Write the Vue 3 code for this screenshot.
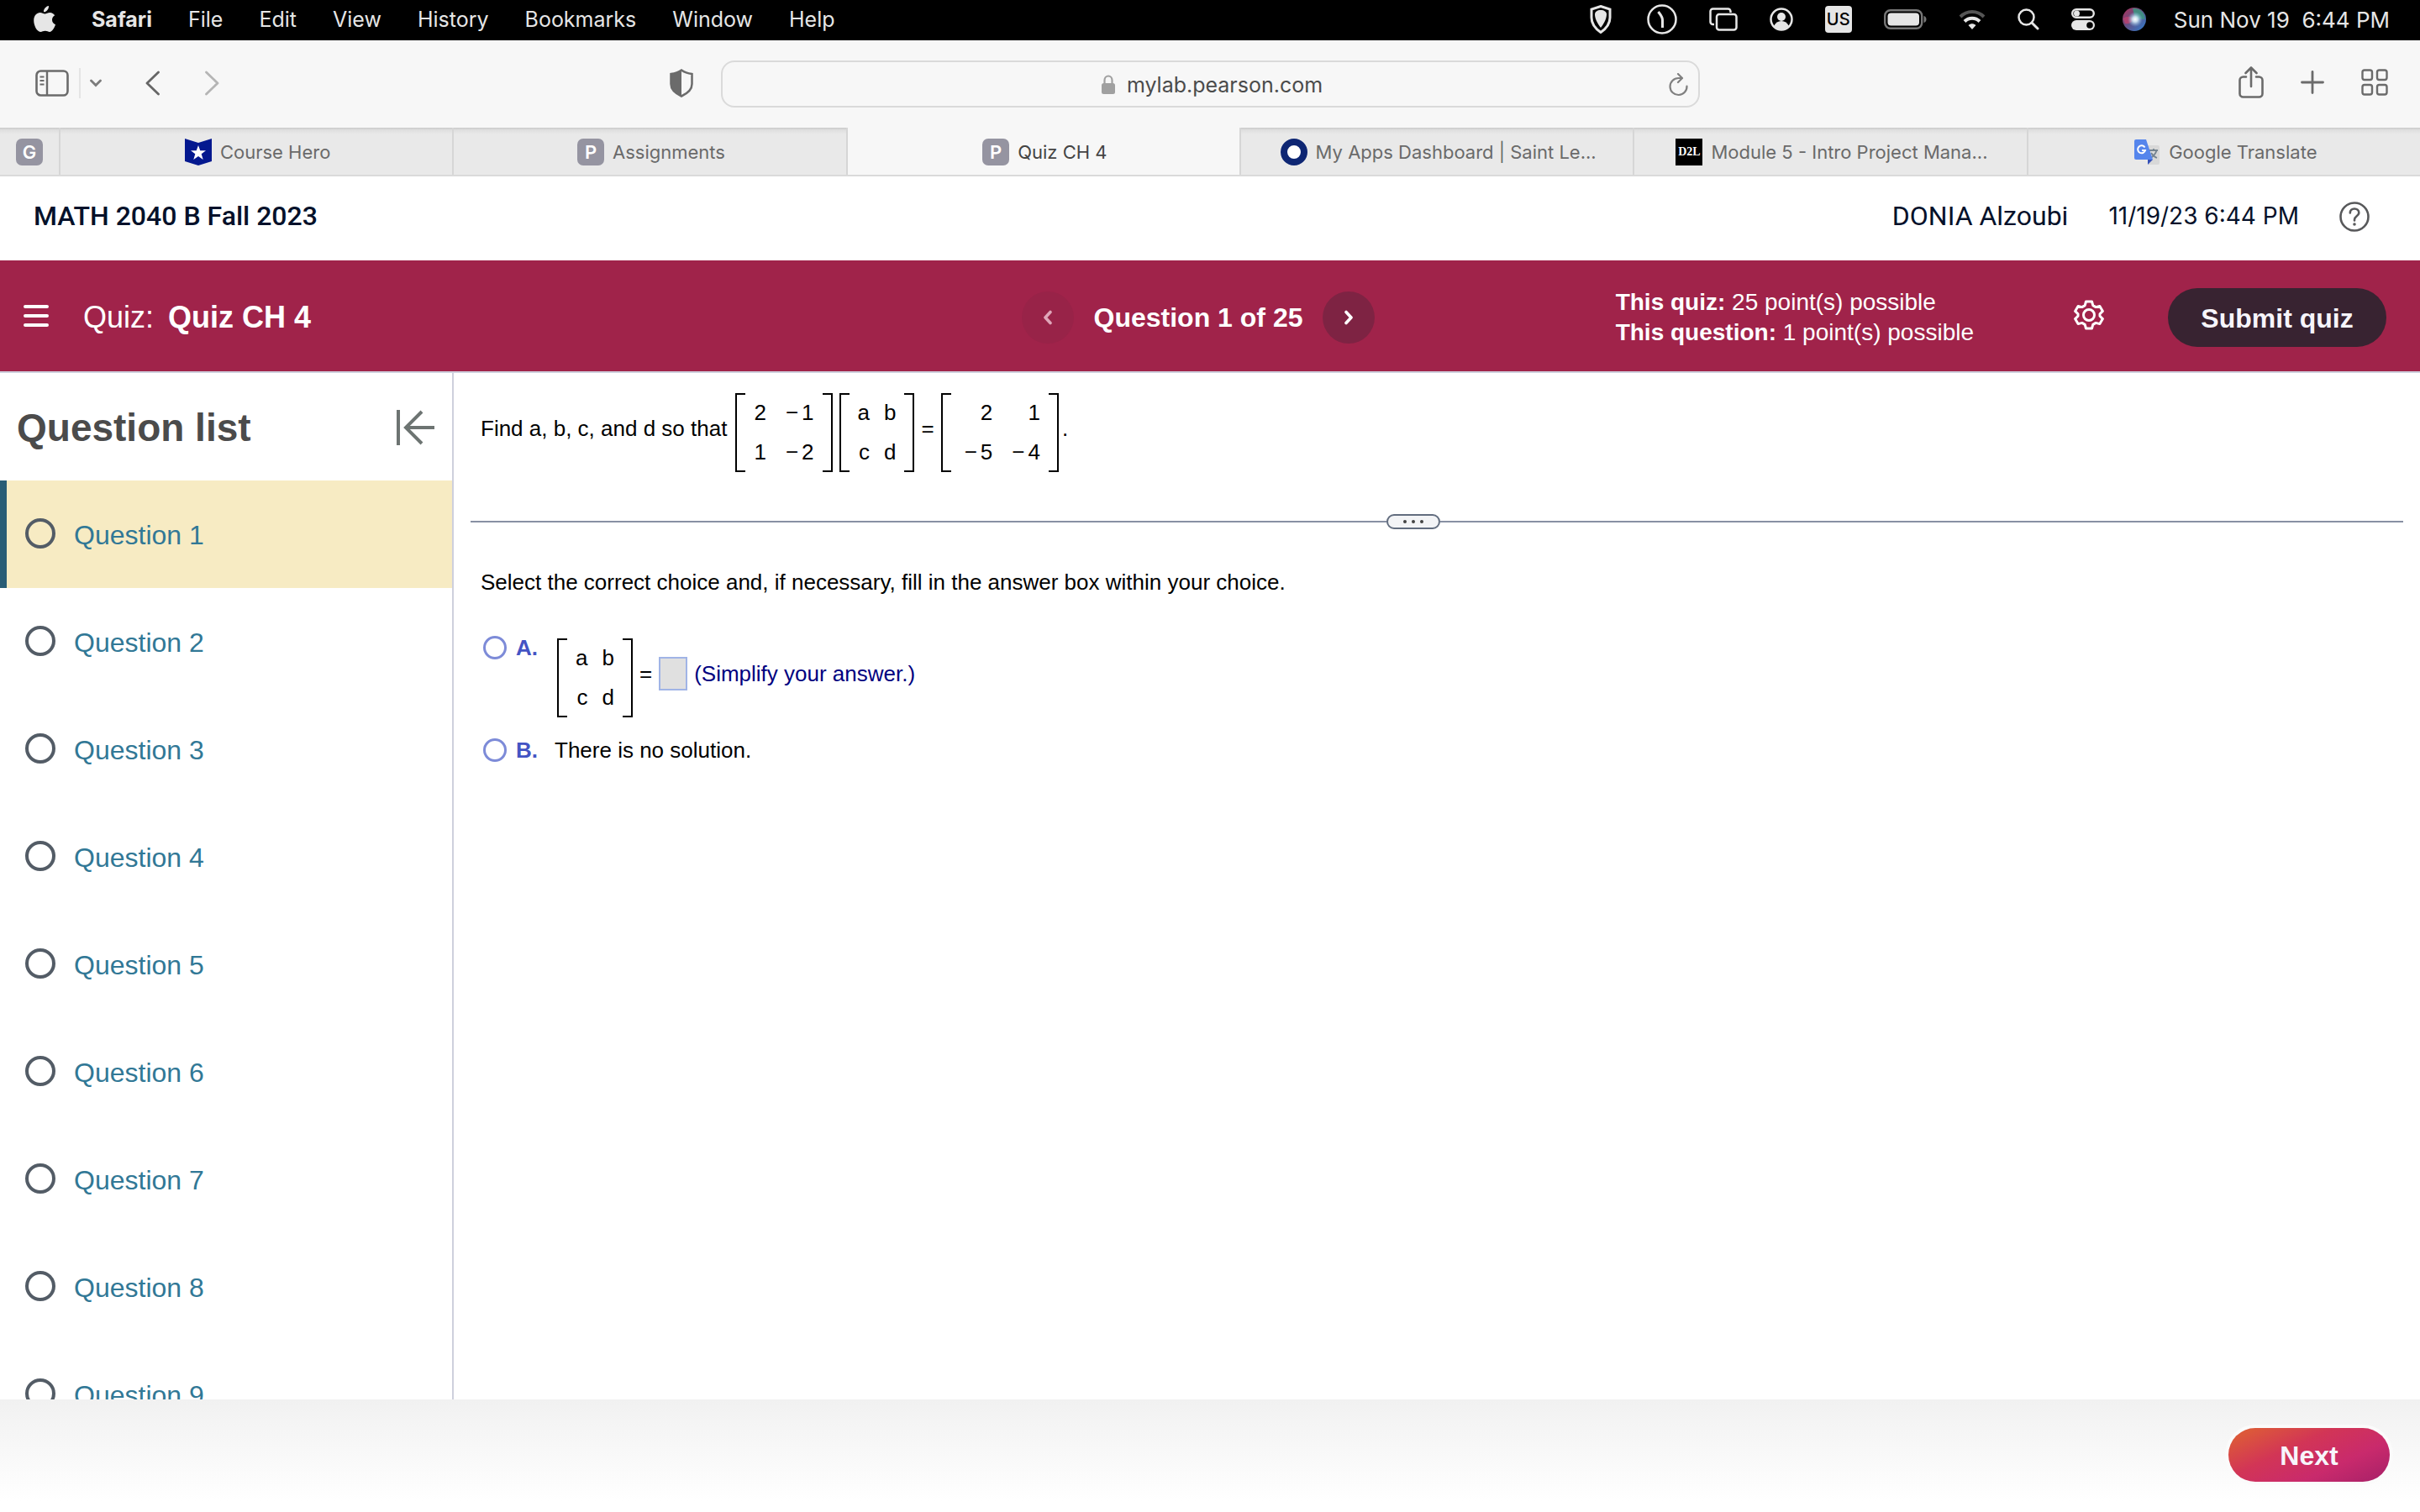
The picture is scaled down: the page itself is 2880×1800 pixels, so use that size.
<script setup>
import { ref } from 'vue'

const menus = ['File', 'Edit', 'View', 'History', 'Bookmarks', 'Window', 'Help']

const tabs = [
  { icon: 'hero', title: 'Course Hero' },
  { icon: 'letter', title: 'Assignments' },
  { icon: 'letter', title: 'Quiz CH 4', active: true },
  { icon: 'ring', title: 'My Apps Dashboard | Saint Le...' },
  { icon: 'd2l', title: 'Module 5 - Intro Project Mana...' },
  { icon: 'translate', title: 'Google Translate' },
]

const questions = [1, 2, 3, 4, 5, 6, 7, 8, 9]
const current = ref(1)
const choice = ref('')
const answer = ref('')
const address = ref('mylab.pearson.com')

const coefficients = [['2', '−1'], ['1', '−2']]
const unknowns = [['a', 'b'], ['c', 'd']]
const product = [['2', '1'], ['−5', '−4']]
</script>

<template>
  <div class="screen">
    <header class="menubar">
      <nav class="menus">
        <svg class="apple" width="26" height="32" viewBox="0 0 26 32" fill="#e6e6e6">
          <path d="M18 0c.3 3.600-2.700 7.300-6 7.300C11.500 3.900 14.700.5 18 0z" />
          <path d="M25.200 11.200c-2 1.200-3.200 3-3.200 5.300 0 2.700 1.500 4.800 4 5.800-.9 3-3.500 8.200-6.500 8.700-2 .2-3.300-1.200-5.700-1.200-2.500 0-3.800 1.300-5.700 1.200C4 30.700.2 23.500.2 17.500c0-6 3.700-9.500 7.500-9.500 2.200 0 4 1.400 5.700 1.400 1.500 0 3.500-1.500 6.100-1.500 2.300 0 4.400 1.300 5.700 3.300z" />
        </svg>
        <strong>Safari</strong>
        <span v-for="m in menus" :key="m">{{ m }}</span>
      </nav>
      <div class="status">
        <div class="status-icons">
          <svg width="30" height="34" viewBox="0 0 30 34" fill="none">
            <path d="M13 1.500 24 5v10c0 8-6 14-11 17.500C8 29 2 23 2 15V5z" stroke="#e6e6e6" stroke-width="3" />
            <path d="M13 6c4 0 7 2 7 5 0 6-4 12-7 16-3-4-7-10-7-16 0-3 3-5 7-5z" fill="#e6e6e6" />
          </svg>
          <svg width="36" height="36" viewBox="0 0 36 36" fill="none" stroke="#e6e6e6">
            <circle cx="18" cy="18" r="16.500" stroke-width="2.500" />
            <path d="M13.500 9c3 4 5 6 5 10v9" stroke-width="3" />
          </svg>
          <svg width="34" height="28" viewBox="0 0 34 28" fill="none" stroke="#e6e6e6" stroke-width="2.500">
            <path d="M6 20H4.500a3 3 0 0 1-3-3V4.500a3 3 0 0 1 3-3h18a3 3 0 0 1 3 3V6" />
            <rect x="9" y="8" width="23.500" height="18.500" rx="3" />
          </svg>
          <svg width="28" height="28" viewBox="0 0 28 28">
            <circle cx="14" cy="14" r="12.500" fill="none" stroke="#e6e6e6" stroke-width="2.500" />
            <circle cx="14" cy="11" r="5" fill="#e6e6e6" />
            <path d="M5 22c2-4 5-6 9-6s7 2 9 6c-5 5.500-13 5.500-18 0z" fill="#e6e6e6" />
          </svg>
          <span class="keyboard">US</span>
          <svg width="51" height="24" viewBox="0 0 51 24">
            <rect x="1.200" y="1.200" width="44" height="21.600" rx="6.500" fill="none" stroke="#777" stroke-width="2.400" />
            <rect x="4.500" y="4.500" width="37.500" height="15" rx="4" fill="#e6e6e6" />
            <path d="M47.500 8c4 1 4 7 0 8z" fill="#777" />
          </svg>
          <svg width="32" height="24" viewBox="0 0 32 24" fill="none" stroke-width="4">
            <path d="M2 9c8-8 20-8 28 0" stroke="#555" />
            <path d="M7 14.500c5-5 13-5 18 0" stroke="#e6e6e6" />
            <path d="M11.500 19c3-2.500 6-2.500 9 0L16 24z" fill="#e6e6e6" />
          </svg>
          <svg width="26" height="26" viewBox="0 0 26 26" fill="none" stroke="#e6e6e6">
            <circle cx="10.500" cy="10.500" r="9" stroke-width="2.500" />
            <path d="m17 17 7 7" stroke-width="3" stroke-linecap="round" />
          </svg>
          <svg width="28" height="26" viewBox="0 0 28 26">
            <rect x="1.200" y="1.200" width="25.600" height="9.600" rx="4.800" fill="none" stroke="#e6e6e6" stroke-width="2.400" />
            <circle cx="6.500" cy="6" r="3.500" fill="#e6e6e6" />
            <rect y="14" width="28" height="12" rx="6" fill="#e6e6e6" />
            <circle cx="22" cy="20" r="3.800" fill="#000" />
          </svg>
        </div>
        <svg width="28" height="28" viewBox="0 0 28 28">
          <defs>
            <linearGradient id="orb" x1="0" y1="0" x2="1" y2="1">
              <stop offset="0" stop-color="#b5325c" /><stop offset=".4" stop-color="#6a4a7c" />
              <stop offset="1" stop-color="#2b7fd0" />
            </linearGradient>
            <radialGradient id="glow">
              <stop offset="0" stop-color="#fff" /><stop offset=".35" stop-color="#d5ecf7" stop-opacity=".9" />
              <stop offset="1" stop-color="#7fb9e0" stop-opacity="0" />
            </radialGradient>
          </defs>
          <circle cx="14" cy="14" r="14" fill="url(#orb)" />
          <path d="M12 1c9-1 15 6 14.500 13L15 13z" fill="#3a9a80" opacity=".8" />
          <path d="M1 13c4-3 9-3 12 1-2 4-6 6-10 5z" fill="#c8406e" opacity=".7" />
          <circle cx="15" cy="14" r="9" fill="url(#glow)" />
        </svg>
        <time class="clock">Sun Nov 19&nbsp; 6:44 PM</time>
      </div>
    </header>

    <div class="toolbar">
      <div class="tools-left">
        <button class="tool" aria-label="Sidebar">
          <svg width="40" height="32" viewBox="0 0 40 32" fill="none" stroke="#6b6b6b">
            <rect x="1.500" y="1.500" width="37" height="29" rx="5" stroke-width="2.600" />
            <path d="M14 2v28" stroke-width="2.400" /><path d="M5.500 8.500h5M5.500 13h5M5.500 17.500h5" stroke-width="2" />
          </svg>
        </button>
        <i class="rule"></i>
        <button class="tool menu-caret" aria-label="Tab groups">
          <svg width="14" height="10" viewBox="0 0 14 10" fill="none" stroke="#7c7c7c" stroke-width="2.800" stroke-linecap="round"><path d="m1.500 2 5.500 5.500L12.500 2" /></svg>
        </button>
        <button class="tool back" aria-label="Back">
          <svg width="17" height="30" viewBox="0 0 17 30" fill="none" stroke="#666" stroke-width="2.800" stroke-linecap="round" stroke-linejoin="round"><path d="M15.500 2 2 15l13.500 13" /></svg>
        </button>
        <button class="tool forward" aria-label="Forward">
          <svg width="17" height="30" viewBox="0 0 17 30" fill="none" stroke="#b5b5b5" stroke-width="2.800" stroke-linecap="round" stroke-linejoin="round"><path d="M1.500 2 15 15 1.500 28" /></svg>
        </button>
        <button class="tool privacy" aria-label="Privacy report">
          <svg width="28" height="34" viewBox="0 0 28 34">
            <path d="M14 1.500c4 3 8 4 12.500 4.500v12c0 7-6 11.500-12.500 14.500C7.500 29.500 1.500 25 1.500 18V6C6 5.500 10 4.500 14 1.500z" fill="none" stroke="#6b6b6b" stroke-width="2.500" />
            <path d="M14 1.500v31C7.500 29.500 1.500 25 1.500 18V6C6 5.500 10 4.500 14 1.500z" fill="#6b6b6b" />
          </svg>
        </button>
      </div>
      <div class="address">
        <svg width="16" height="24" viewBox="0 0 16 24">
          <path d="M3.500 11V6.500a4.500 5 0 0 1 9 0V11" fill="none" stroke="#a0a0a0" stroke-width="2.200" />
          <rect y="10" width="16" height="13" rx="2.500" fill="#a0a0a0" />
        </svg>
        <input v-model="address" aria-label="Address" />
        <button class="tool reload" aria-label="Reload">
          <svg width="24" height="28" viewBox="0 0 24 28" fill="none" stroke="#808080" stroke-width="2.200" stroke-linecap="round" stroke-linejoin="round">
            <path d="M21.500 15.500A10 10 0 1 1 11.500 6h4" /><path d="m11 1 5 5-5 5" />
          </svg>
        </button>
      </div>
      <div class="tools-right">
        <button class="tool" aria-label="Share">
          <svg width="30" height="38" viewBox="0 0 30 38" fill="none" stroke="#6b6b6b" stroke-width="2.600" stroke-linecap="round" stroke-linejoin="round">
            <path d="M9 12.500H5.500a4 4 0 0 0-4 4v16a4 4 0 0 0 4 4h19a4 4 0 0 0 4-4v-16a4 4 0 0 0-4-4H21" />
            <path d="M15 24V2M8.500 8 15 1.500 21.500 8" />
          </svg>
        </button>
        <button class="tool" aria-label="New tab">
          <svg width="28" height="28" viewBox="0 0 28 28" stroke="#6b6b6b" stroke-width="2.800" stroke-linecap="round"><path d="M14 1.500v25M1.500 14h25" /></svg>
        </button>
        <button class="tool" aria-label="Tab overview">
          <svg width="32" height="32" viewBox="0 0 32 32" fill="none" stroke="#6b6b6b" stroke-width="2.400">
            <rect x="1.500" y="1.500" width="11.500" height="11.500" rx="2.500" /><rect x="19" y="1.500" width="11.500" height="11.500" rx="2.500" />
            <rect x="1.500" y="19" width="11.500" height="11.500" rx="2.500" /><rect x="19" y="19" width="11.500" height="11.500" rx="2.500" />
          </svg>
        </button>
      </div>
    </div>

    <nav class="tabs">
      <button class="tab pinned" aria-label="Pinned tab"><span class="letter">G</span></button>
      <button v-for="t in tabs" :key="t.title" class="tab" :class="{ active: t.active }">
        <span v-if="t.icon === 'letter'" class="letter">P</span>
        <span v-else-if="t.icon === 'd2l'" class="d2l">D2L</span>
        <span v-else-if="t.icon === 'ring'" class="ring"></span>
        <svg v-else-if="t.icon === 'hero'" width="32" height="32" viewBox="0 0 32 32">
          <path d="M0 0l16 5L32 0v27l-16 5-16-5z" fill="#04188f" />
          <path d="m16 8 2.300 6.200H25l-5.300 4 2 6.800-5.700-4-5.700 4 2-6.800-5.300-4h6.700z" fill="#fff" />
        </svg>
        <svg v-else width="32" height="32" viewBox="0 0 32 32">
          <path d="M14 8h15a2 2 0 0 1 2 2v19a2 2 0 0 1-2 2H18z" fill="#d8d8d8" />
          <path d="M19 14h10M24 12v2M27.500 14c-1 4-4 7-7 9M21 17c2 3 4 5 7 6" fill="none" stroke="#74838f" stroke-width="1.800" />
          <path d="M17 25h6l-6 6z" fill="#3450b8" />
          <path d="M3 1h12l8 24H3a2 2 0 0 1-2-2V3a2 2 0 0 1 2-2z" fill="#5585ec" />
          <path d="M13.500 10.500A4.500 4.500 0 1 0 14 14h-4" fill="none" stroke="#fff" stroke-width="2" />
        </svg>
        <span>{{ t.title }}</span>
      </button>
    </nav>

    <header class="course">
      <h1>MATH 2040 B Fall 2023</h1>
      <div class="user">
        <span>DONIA Alzoubi</span>
        <time class="stamp">11/19/23 6:44 PM</time>
        <button class="tool help" aria-label="Help">
          <svg width="36" height="36" viewBox="0 0 36 36" fill="none" stroke="#58595b" stroke-width="2.600">
            <circle cx="18" cy="18" r="16.500" />
            <path d="M12.800 13.500c0-3.200 2.300-5 5.200-5s5.300 1.800 5.300 4.800c0 4-5.300 4-5.300 8.200v1" stroke-linecap="round" />
            <circle cx="18" cy="27" r="1" fill="#58595b" stroke-width="1.600" />
          </svg>
        </button>
      </div>
    </header>

    <div class="quizbar">
      <div class="quiz-name">
        <button class="tool hamburger" aria-label="Menu">
          <svg width="30" height="28" viewBox="0 0 30 28" stroke="#fff" stroke-width="4" stroke-linecap="round"><path d="M2 3h26M2 14h26M2 25h26" /></svg>
        </button>
        <span>Quiz:</span><strong>Quiz CH 4</strong>
      </div>
      <div class="pager">
        <button class="round" disabled aria-label="Previous question">
          <svg width="12" height="18" viewBox="0 0 12 18" fill="none" stroke="#dfa6b9" stroke-width="3.600" stroke-linecap="round" stroke-linejoin="round"><path d="M9 2.500 3 9l6 6.500" /></svg>
        </button>
        <strong>Question 1 of 25</strong>
        <button class="round next-round" aria-label="Next question">
          <svg width="12" height="18" viewBox="0 0 12 18" fill="none" stroke="#fff" stroke-width="3.600" stroke-linecap="round" stroke-linejoin="round"><path d="M3 2.500 9 9l-6 6.500" /></svg>
        </button>
      </div>
      <div class="quiz-side">
        <div class="points">
          <div><strong>This quiz:</strong> 25 point(s) possible</div>
          <div><strong>This question:</strong> 1 point(s) possible</div>
        </div>
        <button class="tool settings" aria-label="Settings">
          <svg width="36" height="36" viewBox="0 0 36 36" fill="none" stroke="#fff" stroke-width="3" stroke-linejoin="round">
            <path d="M14.500 2h7l1.300 4.600 3.400 2 4.700-1.200 3.500 6L31 16.800v2.400l3.400 3.400-3.500 6-4.700-1.200-3.400 2L21.500 34h-7l-1.300-4.600-3.400-2-4.700 1.200-3.500-6L5 19.200v-2.400l-3.400-3.400 3.500-6 4.700 1.200 3.400-2z" />
            <circle cx="18" cy="18" r="6.500" />
          </svg>
        </button>
        <button class="submit">Submit quiz</button>
      </div>
    </div>

    <div class="body">
      <aside class="sidebar">
        <div class="list-head">
          <h2>Question list</h2>
          <button class="tool" aria-label="Collapse list">
            <svg width="46" height="42" viewBox="0 0 46 42" fill="none" stroke="#6d7472" stroke-width="4"><path d="M2 0v42M45 21H11M30 2 11 21l19 19" /></svg>
          </button>
        </div>
        <ul>
          <li v-for="n in questions" :key="n">
            <a href="#" :class="{ current: n === current }" @click.prevent="current = n"><i class="dot"></i>Question {{ n }}</a>
          </li>
        </ul>
      </aside>

      <main class="work">
        <div class="math prompt">
          <span class="lead">Find a, b, c, and d so that</span>
          <table class="matrix"><tbody>
            <tr v-for="(row, r) in coefficients" :key="r">
              <td v-for="(v, c) in row" :key="c"><span v-if="v.length > 1" class="minus">−</span>{{ v.slice(-1) }}</td>
            </tr>
          </tbody></table>
          <table class="matrix"><tbody>
            <tr v-for="(row, r) in unknowns" :key="r"><td v-for="v in row" :key="v">{{ v }}</td></tr>
          </tbody></table>
          <span>=</span>
          <table class="matrix"><tbody>
            <tr v-for="(row, r) in product" :key="r">
              <td v-for="(v, c) in row" :key="c"><span v-if="v.length > 1" class="minus">−</span>{{ v.slice(-1) }}</td>
            </tr>
          </tbody></table>
          <span class="stop">.</span>
        </div>

        <div class="splitter">
          <button aria-label="Resize panes"><i></i><i></i><i></i></button>
        </div>

        <p class="instruction">Select the correct choice and, if necessary, fill in the answer box within your choice.</p>

        <div class="choice choice-a">
          <input id="choice-a" v-model="choice" type="radio" name="choice" value="A" />
          <label for="choice-a" class="key">A.</label>
          <div class="math">
            <table class="matrix"><tbody>
              <tr v-for="(row, r) in unknowns" :key="r"><td v-for="v in row" :key="v">{{ v }}</td></tr>
            </tbody></table>
            <span>=</span>
            <input id="answer" v-model="answer" class="answer" type="text" />
            <label for="answer" class="hint">(Simplify your answer.)</label>
          </div>
        </div>
        <div class="choice">
          <input id="choice-b" v-model="choice" type="radio" name="choice" value="B" />
          <label for="choice-b" class="key">B.</label>
          <label for="choice-b">There is no solution.</label>
        </div>
      </main>
    </div>

    <footer class="footer"><button class="next">Next</button></footer>
  </div>
</template>

<style>
body { margin: 0; }
</style>

<style scoped>
* { box-sizing: border-box; }
.screen {
  display: flex;
  flex-direction: column;
  height: 100vh;
  overflow: hidden;
  background: #fff;
  color: #000;
  font-family: "Liberation Sans", Arial, sans-serif;
  font-size: 26px;
}
svg { display: block; flex: none; }
h1, h2, p, ul { margin: 0; padding: 0; }
button, input { font: inherit; color: inherit; }
.tool { border: 0; padding: 0; background: none; flex: none; }

.menubar {
  flex: none;
  display: flex;
  align-items: center;
  justify-content: space-between;
  height: 48px;
  padding: 0 36px 2px 40px;
  background: #000;
  color: #e6e6e6;
  font-family: Inter, sans-serif;
  font-size: 25px;
  white-space: nowrap;
}
.menus { display: flex; align-items: center; gap: 43px; }
.status { display: flex; align-items: center; gap: 33px; }
.status-icons { display: flex; align-items: center; gap: 38px; }
.clock { font-size: 26px; }
.keyboard {
  width: 32px;
  border-radius: 4px;
  background: #e6e6e6;
  color: #000;
  font-size: 20px;
  font-weight: 500;
  line-height: 32px;
  text-align: center;
}

.toolbar {
  flex: none;
  display: grid;
  grid-template-columns: 1fr minmax(0, 1165px) 1fr;
  align-items: center;
  height: 104px;
  background: #f7f7f7;
  font-family: Inter, sans-serif;
}
.tools-left { display: flex; align-items: center; padding: 0 33px 2px 42px; }
.rule { width: 2px; height: 36px; margin: 0 11px 0 12px; background: #e4e4e4; }
.back { margin-left: 52px; }
.forward { margin-left: 54px; }
.privacy { margin-left: auto; }
.address {
  position: relative;
  display: flex;
  align-items: center;
  justify-content: center;
  gap: 14px;
  height: 56px;
  padding: 2px 0 0 5px;
  border: 2px solid #dadada;
  border-radius: 16px;
  color: #4b4b4b;
  font-size: 25px;
}
.address input {
  field-sizing: content;
  padding: 0;
  border: 0;
  background: none;
  outline: 0;
}
.reload { position: absolute; right: 11px; }
.tools-right { display: flex; align-items: center; justify-content: flex-end; gap: 44px; padding: 0 38px 4px 0; }

.tabs {
  flex: none;
  display: flex;
  height: 58px;
  border-bottom: 2px solid #dadada;
  background: #e9e9e9;
}
.tab {
  flex: 1 1 0;
  min-width: 0;
  display: flex;
  align-items: center;
  justify-content: center;
  gap: 10px;
  padding: 2px 0 0 3px;
  border: 0;
  border-right: 2px solid #d6d6d6;
  background: linear-gradient(#c9c9c9, #e0e0e0 3px, #e9e9e9 8px);
  color: #6a6a6a;
  font-family: Inter, sans-serif;
  font-size: 22px;
  white-space: nowrap;
}
.tab:last-child { border-right: 0; }
.tab.active { background: #f7f7f7; color: #444; }
.pinned { flex: 0 0 72px; padding: 2px 0 0; }
.letter, .d2l {
  width: 32px;
  border-radius: 7px;
  background: #9594a1;
  color: #fff;
  font-size: 22px;
  font-weight: 600;
  line-height: 32px;
  text-align: center;
}
.d2l { border-radius: 0; background: #000; font: bold 14px/32px "Liberation Serif", serif; }
.ring { width: 32px; height: 32px; border: 8px solid #0e2673; border-radius: 50%; background: #fff; }

.course {
  flex: none;
  display: flex;
  align-items: center;
  justify-content: space-between;
  height: 100px;
  padding: 0 60px 6px 40px;
  color: #05112a;
  font-family: Roboto, sans-serif;
  font-size: 32px;
}
.course h1 { font-size: 32px; font-weight: 500; }
.user { display: flex; align-items: center; gap: 48px; }
.stamp { font-family: Inter, sans-serif; font-size: 28px; }
.help { padding-top: 2px; }

.quizbar {
  flex: none;
  display: grid;
  grid-template-columns: 1fr auto 1fr;
  align-items: center;
  height: 134px;
  padding: 4px 40px 0 12px;
  border-bottom: 2px solid #ced0dd;
  background: #a0234a;
  color: #fff;
  font-size: 32px;
  white-space: nowrap;
}
.quiz-name { display: flex; align-items: center; gap: 17px; font-size: 36px; }
.hamburger { padding: 0 24px 4px 16px; }
.pager { display: flex; align-items: center; gap: 24px; }
.round {
  display: flex;
  align-items: center;
  justify-content: center;
  width: 62px;
  height: 62px;
  padding: 0;
  border: 0;
  border-radius: 50%;
  background: #982348;
}
.next-round { background: #7e2343; }
.quiz-side { display: flex; align-items: center; justify-content: flex-end; }
.points { font-size: 28px; line-height: 36px; }
.settings { margin: 0 76px 6px 119px; }
.submit {
  width: 260px;
  height: 70px;
  padding: 2px 0 0;
  border: 0;
  border-radius: 35px;
  background: #382331;
  color: #f7f5fb;
  font-weight: bold;
}

.body { flex: 1; min-height: 0; display: flex; }
.sidebar { flex: none; width: 540px; overflow: hidden; border-right: 2px solid #ced0dd; }
.list-head {
  display: flex;
  align-items: center;
  justify-content: space-between;
  height: 128px;
  padding: 2px 20px 0 20px;
  color: #4b4b4b;
}
.list-head h2 { font-size: 46px; }
ul { list-style: none; }
li a {
  display: flex;
  align-items: center;
  gap: 22px;
  height: 128px;
  padding: 2px 0 0 22px;
  border-left: 8px solid transparent;
  color: #317896;
  font-size: 32px;
  text-decoration: none;
}
li a.current { border-color: #295d76; background: #f7ebc3; }
.dot { width: 36px; height: 36px; border: 4px solid #535c66; border-radius: 50%; margin-bottom: 4px; }

.work { flex: 1; padding: 14px 20px 0; }
.math { display: flex; align-items: center; gap: 8px; white-space: nowrap; }
.prompt { padding-left: 12px; }
.lead { margin-right: 2px; }
.matrix {
  position: relative;
  margin-top: 10px;
  border-spacing: 0;
  line-height: 47px;
  text-align: right;
}
.matrix::before, .matrix::after {
  content: "";
  position: absolute;
  top: 0;
  bottom: 0;
  width: 10px;
  border: 2px solid #000;
}
.matrix::before { left: 0; border-right: 0; }
.matrix::after { right: 0; border-left: 0; }
.matrix td { padding: 0 22px 0 17px; }
.matrix td:first-child { padding: 0 0 0 22px; }
.minus { margin: 0 4px 0 6px; }
.stop { margin-left: -4px; }

.splitter { display: flex; align-items: center; height: 18px; margin-top: 50px; }
.splitter::before, .splitter::after { content: ""; flex: 39 1 0; height: 2px; background: #8890a3; }
.splitter::after { flex-grow: 41; }
.splitter button {
  display: flex;
  align-items: center;
  justify-content: center;
  gap: 6px;
  width: 64px;
  height: 18px;
  padding: 0;
  border: 2px solid #626d7f;
  border-radius: 9px;
  background: #f3f4f6;
}
.splitter i { width: 4px; height: 4px; border-radius: 50%; background: #444; }

.instruction { padding: 48px 0 0 12px; line-height: 30px; }
.choice { display: flex; align-items: center; padding-left: 15px; line-height: 30px; margin-top: 24px; }
.choice-a { align-items: flex-start; margin-top: 42px; }
.choice-a > .key { margin-top: 6px; }
.choice input[type="radio"] {
  appearance: none;
  flex: none;
  width: 28px;
  height: 28px;
  margin: 0 11px 0 0;
  border: 3px solid #7d8bd8;
  border-radius: 50%;
  background: #fff;
}
.choice-a input[type="radio"] { margin-top: 7px; }
.key { width: 46px; color: #4454c4; font-weight: bold; }
.choice-a .math { padding-left: 3px; }
.answer { width: 34px; height: 40px; padding: 0; border: 2px solid #a0b4e6; background: #e0e0e0; }
.hint { color: #000080; }

.footer {
  flex: none;
  display: flex;
  justify-content: flex-end;
  height: 134px;
  padding: 34px 36px 0;
  background: linear-gradient(#f1f1f1, #fff 90%);
}
.next {
  width: 192px;
  height: 64px;
  padding: 2px 0 0;
  border: 0;
  border-radius: 32px;
  background: linear-gradient(155deg, #dc583a 10%, #d23556 38%, #c92a6c 68%, #a62068);
  box-shadow: 0 0 0 4px #fbfbfb;
  color: #f7f5fb;
  font-size: 32px;
  font-weight: bold;
}
</style>
